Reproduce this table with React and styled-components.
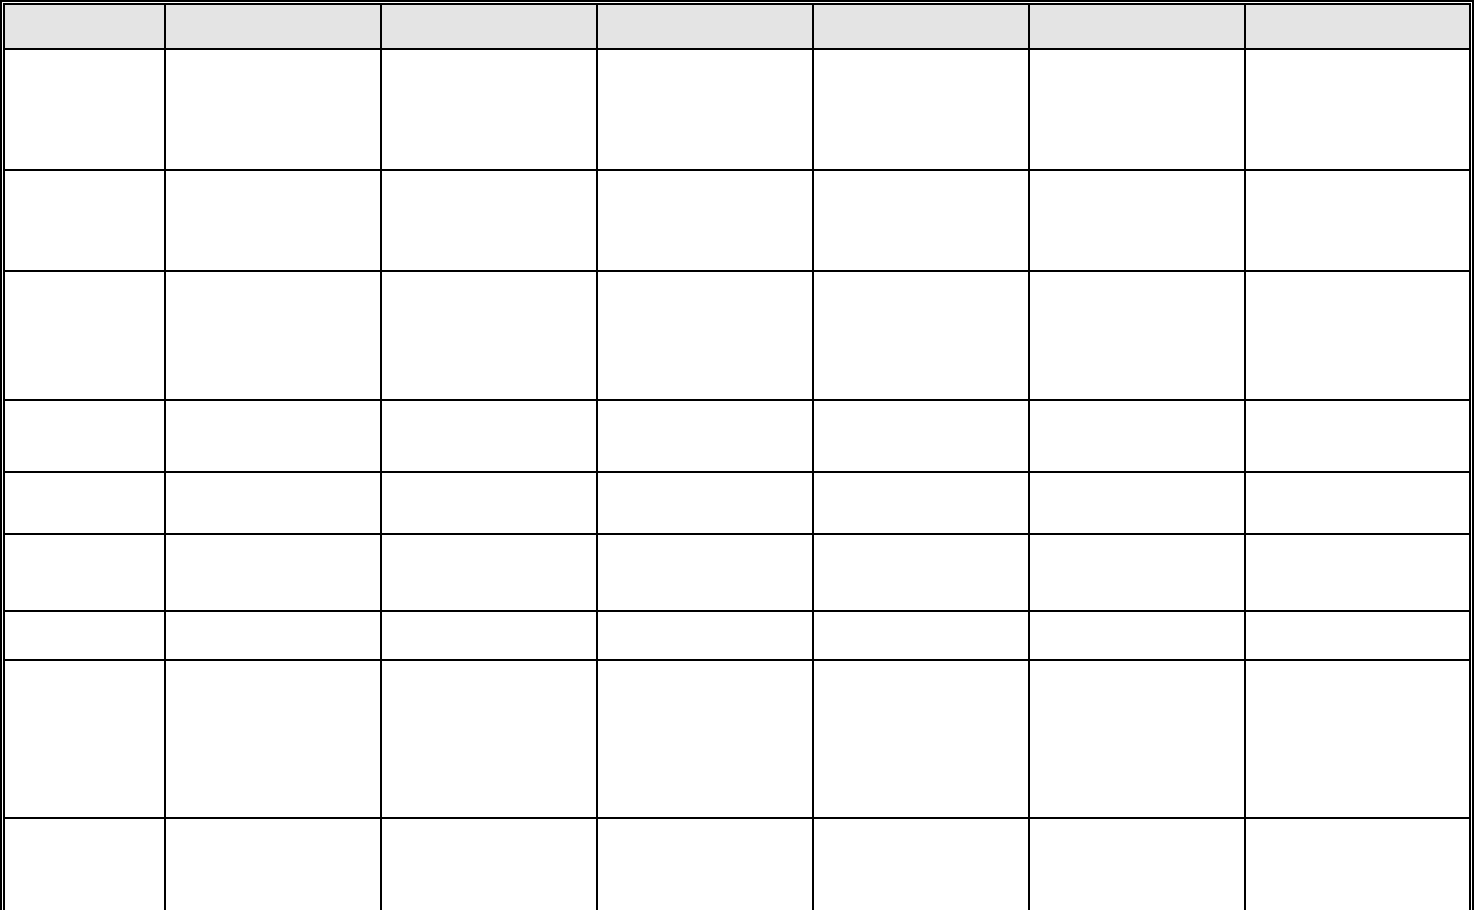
import React from 'react';
import styled, { createGlobalStyle } from 'styled-components';

const GlobalStyle = createGlobalStyle`
  html, body {
    margin: 0;
    padding: 0;
    background: #ffffff;
    overflow: hidden;
    font-family: "Liberation Sans", Arial, sans-serif;
    font-size: 13px;
  }
`;

const Frame = styled.div`
  width: 1474px;
  box-sizing: border-box;
  border: 2px solid #000;
  padding: 1px;
`;

const Table = styled.table`
  width: 1468px;
  table-layout: fixed;
  border-collapse: collapse;
  border: 2px solid #000;
`;

const HeadCell = styled.th`
  background: #e4e4e4;
  border: 2px solid #000;
  padding: 0;
  font-weight: bold;
  text-align: left;
`;

const Row = styled.tr`
  height: ${({ $h }) => $h}px;
`;

const Cell = styled.td`
  border: 2px solid #000;
  padding: 0;
  vertical-align: top;
  background: #ffffff;
`;

const columns = [161, 216, 216, 216, 216, 216, 225];
const rowHeights = [121, 101, 129, 72, 62, 77, 49, 158, 120];

const App = () => (
  <>
    <GlobalStyle />
    <Frame>
      <Table>
        <colgroup>
          {columns.map((w, i) => (
            <col key={i} style={{ width: w }} />
          ))}
        </colgroup>
        <thead>
          <Row $h={45}>
            {columns.map((_, i) => (
              <HeadCell key={i} />
            ))}
          </Row>
        </thead>
        <tbody>
          {rowHeights.map((h, r) => (
            <Row key={r} $h={h}>
              {columns.map((_, c) => (
                <Cell key={c} />
              ))}
            </Row>
          ))}
        </tbody>
      </Table>
    </Frame>
  </>
);

export default App;
